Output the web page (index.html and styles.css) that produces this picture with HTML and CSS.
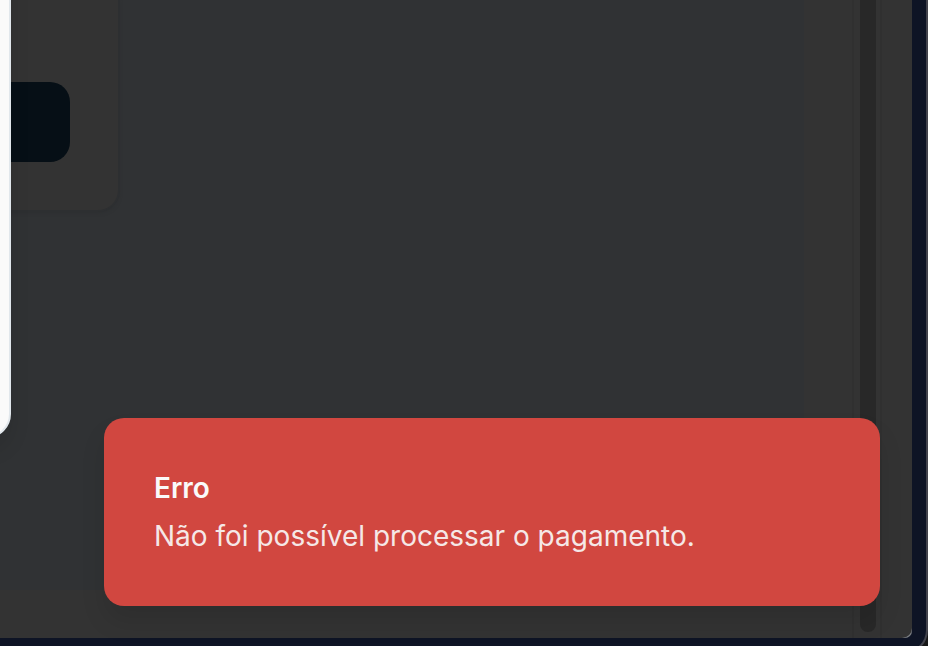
FILE: index.html
```
<!DOCTYPE html>
<html lang="pt-BR">
<head>
<meta charset="utf-8">
<meta name="viewport" content="width=device-width, initial-scale=1">
<title>Pagamento</title>
<link rel="stylesheet" href="styles.css">
</head>
<body>
<div class="frame">
  <div class="shell">
    <div class="window">
      <main class="page">
        <div class="content">
          <section class="card">
            <button class="card-action" type="button" aria-label="Pagar"></button>
          </section>
        </div>
      </main>
      <div class="scrollbar"><div class="thumb"></div></div>
    </div>
  </div>
</div>
<div class="dialog" role="dialog" aria-label="Pagamento"></div>
<div class="toast" role="alert">
  <h2 class="toast-title">Erro</h2>
  <p class="toast-text">Não foi possível processar o pagamento.</p>
</div>
</body>
</html>
```
FILE: styles.css
```
* {
  box-sizing: border-box;
}

body {
  margin: 0;
  height: 100vh;
  position: relative;
  overflow: hidden;
  background: #171717;
  font-family: Inter, sans-serif;
}

.frame {
  height: calc(100vh + 8px);
  padding: 0 14px 14px 0;
  background: #0e1425;
  border-right: 2px solid #42434c;
  border-bottom: 2px solid #42434c;
  border-bottom-right-radius: 24px;
}

.shell {
  height: calc(100vh - 8px);
  background: #7c7f83;
  border-bottom-right-radius: 7px;
}

.window {
  display: flex;
  height: 100%;
  padding-right: 30px;
  background: #333333;
  border-bottom-right-radius: 10px;
}

.page {
  flex: 1;
  padding: 0 48px 48px 0;
}

.content {
  height: 100%;
  background: #303234;
}

.card {
  display: flex;
  width: 118px;
  height: 210px;
  padding: 82px 48px 48px 0;
  background: #333333;
  border-bottom-right-radius: 20px;
  box-shadow: 0 0 0 2px #2d2f31, 0 2px 4px #2b2d2f;
}

.card-action {
  flex: 1;
  padding: 0;
  border: 0;
  border-radius: 0 20px 20px 0;
  background: #060f16;
}

.scrollbar {
  width: 30px;
  padding: 0 4px 6px 6px;
  border-left: 2px solid #303030;
  border-right: 2px solid #303030;
}

.thumb {
  width: 16px;
  height: 100%;
  border-radius: 0 0 8px 8px;
  background: #282828;
}

.dialog {
  position: absolute;
  top: 0;
  left: 0;
  width: 11px;
  height: 438px;
}

.dialog::before {
  content: "";
  position: absolute;
  top: -40px;
  right: 0;
  bottom: 0;
  width: 80px;
  border: 2px solid #e1e7ec;
  border-radius: 24px;
  background: #fafafa;
  box-shadow: 0 12px 20px rgba(0, 0, 0, 0.1);
}

.toast {
  position: absolute;
  right: 48px;
  bottom: 40px;
  left: 104px;
  padding: 50px;
  border-radius: 20px;
  background: #d14740;
  color: #fafafa;
  box-shadow: 0 16px 24px rgba(0, 0, 0, 0.1);
}

.toast-title,
.toast-text {
  margin: 0;
  font-size: 28px;
  line-height: 40px;
}

.toast-title {
  font-weight: 600;
}

.toast-text {
  margin-top: 8px;
  opacity: 0.9;
}
```
